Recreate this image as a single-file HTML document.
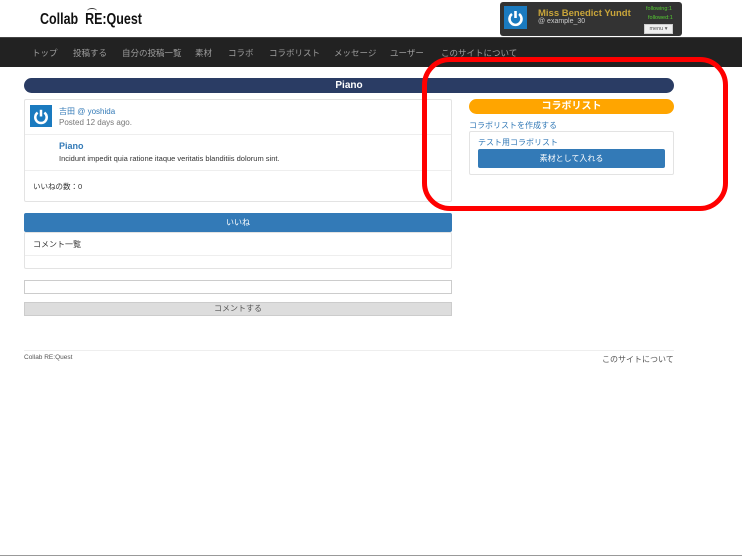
<!DOCTYPE html>
<html><head><meta charset="utf-8"><style>
*{box-sizing:border-box;margin:0;padding:0}
body{width:742px;height:557px;position:relative;background:#fff;font-family:"Liberation Sans","Noto Sans CJK JP",sans-serif;font-size:8px;color:#333;overflow:hidden}
.a{position:absolute}
.nav{left:0;top:37px;width:742px;height:30px;background:#222;border-top:1px solid #444}
.nav span{color:#9d9d9d;font-size:8.5px;position:absolute;top:9px}
.card{border:1px solid #e3e3e3;border-radius:2px;background:#fff}
.av{background:#1a7abf;width:22px;height:22px}
</style></head><body>
<div class="a" style="left:40px;top:11px;font-weight:bold;font-size:16px;color:#111;transform:scaleX(.78);transform-origin:left;letter-spacing:0">Collab &nbsp;RE:Quest</div>
<div class="a" style="left:87px;top:8px;width:10px;height:6px;border-top:1.5px solid #333;border-radius:50% 50% 0 0"></div>
<div class="a" style="left:500px;top:2px;width:182px;height:34px;background:#333;border-radius:3px"></div>
<div class="a av" style="left:504px;top:6px;width:23px;height:23px"><svg width="23" height="23" viewBox="0 0 23 23"><path d="M8 8a6 6 0 1 0 7 0" stroke="#fff" stroke-width="2.6" fill="none"/><path d="M11.5 5v7" stroke="#fff" stroke-width="2.6"/></svg></div>
<div class="a" style="left:538px;top:8px;color:#c9a53a;font-weight:bold;font-size:9.5px">Miss Benedict Yundt</div>
<div class="a" style="left:538px;top:18px;color:#ccc;font-size:7px">@ example_30</div>
<div class="a" style="left:646px;top:6px;color:#5c3;font-size:5.5px">following:1</div>
<div class="a" style="left:648px;top:15px;color:#5c3;font-size:5.5px">followed:1</div>
<div class="a" style="left:644px;top:24px;width:29px;height:10px;background:#eee;border:1px solid #ccc;font-size:5.5px;color:#555;text-align:center;line-height:8px">menu ▾</div>
<div class="a nav"><span style="left:32px">トップ</span><span style="left:73px">投稿する</span><span style="left:122px">自分の投稿一覧</span><span style="left:195px">素材</span><span style="left:228px">コラボ</span><span style="left:269px">コラボリスト</span><span style="left:334px">メッセージ</span><span style="left:390px">ユーザー</span><span style="left:441px">このサイトについて</span></div>

<div class="a" style="left:24px;top:78px;width:650px;height:15px;background:#2a3c64;border-radius:8px;color:#fff;font-weight:bold;font-size:10px;text-align:center;line-height:15px">Piano</div>

<div class="a card" style="left:24px;top:99px;width:428px;height:103px"></div>
<div class="a" style="left:25px;top:134px;width:426px;border-top:1px solid #eee"></div>
<div class="a" style="left:25px;top:170px;width:426px;border-top:1px solid #eee"></div>
<div class="a av" style="left:30px;top:105px"><svg width="22" height="22" viewBox="0 0 23 23"><path d="M8 8a6 6 0 1 0 7 0" stroke="#fff" stroke-width="2.6" fill="none"/><path d="M11.5 5v7" stroke="#fff" stroke-width="2.6"/></svg></div>
<div class="a" style="left:59px;top:106px;color:#337ab7;font-size:8px">吉田 @ yoshida</div>
<div class="a" style="left:59px;top:118px;color:#777;font-size:8px">Posted 12 days ago.</div>
<div class="a" style="left:59px;top:141px;color:#337ab7;font-size:9px;font-weight:bold">Piano</div>
<div class="a" style="left:59px;top:154px;font-size:7.5px">Incidunt impedit quia ratione itaque veritatis blanditiis dolorum sint.</div>
<div class="a" style="left:33px;top:181px;font-size:7.5px">いいねの数：0</div>

<div class="a" style="left:24px;top:213px;width:428px;height:19px;background:#337ab7;border-radius:2px;color:#fff;text-align:center;line-height:19px">いいね</div>
<div class="a card" style="left:24px;top:232px;width:428px;height:37px"></div>
<div class="a" style="left:25px;top:255px;width:426px;border-top:1px solid #eee"></div>
<div class="a" style="left:33px;top:239px;font-size:8px">コメント一覧</div>
<div class="a" style="left:24px;top:280px;width:428px;height:14px;border:1px solid #ccc"></div>
<div class="a" style="left:24px;top:302px;width:428px;height:14px;background:#ddd;border:1px solid #ccc;text-align:center;line-height:12px;color:#555">コメントする</div>
<div class="a" style="left:24px;top:350px;width:650px;border-top:1px solid #eee"></div>
<div class="a" style="left:24px;top:354px;font-size:6.5px;color:#555">Collab RE:Quest</div>
<div class="a" style="left:602px;top:354px;font-size:8px;color:#555">このサイトについて</div>

<div class="a" style="left:469px;top:99px;width:205px;height:15px;background:#ffa500;border-radius:8px;color:#fff;font-weight:bold;font-size:10px;text-align:center;line-height:15px">コラボリスト</div>
<div class="a" style="left:469px;top:120px;color:#337ab7;font-size:8px">コラボリストを作成する</div>
<div class="a card" style="left:469px;top:131px;width:205px;height:44px"></div>
<div class="a" style="left:478px;top:137px;color:#337ab7;font-size:8px">テスト用コラボリスト</div>
<div class="a" style="left:478px;top:149px;width:187px;height:19px;background:#337ab7;border-radius:2px;color:#fff;text-align:center;line-height:19px">素材として入れる</div>

<div class="a" style="left:422px;top:57px;width:306px;height:154px;border:5px solid #f00;border-radius:28px"></div>
<div class="a" style="left:0;top:555px;width:742px;border-top:1px solid #999"></div>
</body></html>
